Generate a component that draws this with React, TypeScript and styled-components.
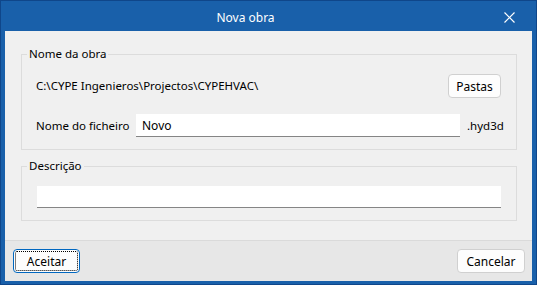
import React from 'react';
import styled, { createGlobalStyle } from 'styled-components';

const GlobalStyle = createGlobalStyle`
  html, body {
    margin: 0;
    padding: 0;
    background: #ffffff;
  }
  body {
    font-family: "Noto Sans", "Liberation Sans", sans-serif;
    font-size: 11.5px;
    color: #000000;
  }
`;

const Window = styled.div`
  width: 537px;
  height: 285px;
  box-sizing: border-box;
  display: flex;
  flex-direction: column;
  background: #1960aa;
  border: 1px solid #0f468a;
  padding: 0 4px 3px 4px;
`;

const TitleBar = styled.div`
  height: 30px;
  display: flex;
  align-items: center;
  color: #ffffff;
  flex-shrink: 0;
`;

const TitleText = styled.div`
  flex: 1;
  text-align: center;
  font-size: 12px;
  padding-top: 2px;
`;

const CloseButton = styled.div`
  width: 46px;
  height: 30px;
  display: flex;
  align-items: center;
  justify-content: center;
  padding-top: 3px;
  box-sizing: border-box;
`;

const Client = styled.div`
  flex: 1;
  display: flex;
  flex-direction: column;
  background: #f0f0f0;
`;

const Content = styled.div`
  flex: 1;
  display: flex;
  flex-direction: column;
  gap: 8px;
  padding: 15px 15px 0 16px;
`;

const Group = styled.fieldset`
  margin: 0;
  min-width: 0;
  border: 1px solid #dcdcdc;
  padding: 0;
`;

const Legend = styled.legend`
  margin-left: 5px;
  padding: 0 2px;
  line-height: 16px;
  font-size: 11.5px;
`;

const GroupBody = styled.div<{ $padLeft: number }>`
  display: flex;
  flex-direction: column;
  gap: 16px;
  padding: 12px 15px 12px ${p => p.$padLeft}px;
`;

const Row = styled.div`
  display: flex;
  align-items: center;
`;

const PathText = styled.div`
  flex: 1;
  line-height: 24px;
`;

const FieldLabel = styled.div`
  width: 100px;
  flex-shrink: 0;
`;

const TextInput = styled.div<{ $height: number }>`
  flex: 1;
  height: ${p => p.$height}px;
  box-sizing: border-box;
  background: #ffffff;
  border-bottom: 1px solid #858585;
  display: flex;
  align-items: center;
  padding: 0 6px;
  font-size: 12px;
`;

const Suffix = styled.div`
  width: 34px;
  padding-left: 7px;
`;

const Footer = styled.div`
  height: 40px;
  flex-shrink: 0;
  border-top: 1px solid #dadada;
  background: #e7e7e7;
  display: flex;
  align-items: center;
  justify-content: space-between;
  padding: 0 7px 0 8px;
`;

const Button = styled.div<{ $width: number; $focused?: boolean }>`
  width: ${p => p.$width}px;
  height: 24px;
  box-sizing: border-box;
  border-radius: 4px;
  background: #fdfdfd;
  border: 1px solid ${p => (p.$focused ? '#0067c0' : '#d0d0d0')};
  display: flex;
  align-items: center;
  justify-content: center;
  font-size: 12px;
  outline: ${p => (p.$focused ? '1px dotted #000000' : 'none')};
  outline-offset: -3px;
`;

export default function App() {
  return (
    <>
      <GlobalStyle />
      <Window>
        <TitleBar>
          <TitleText>Nova obra</TitleText>
          <CloseButton>
            <svg width="11" height="11" viewBox="0 0 11 11">
              <path d="M0.5 0.5 L10.5 10.5 M10.5 0.5 L0.5 10.5" stroke="#ffffff" strokeWidth="1.2" fill="none" />
            </svg>
          </CloseButton>
        </TitleBar>
        <Client>
          <Content>
            <Group>
              <Legend>Nome da obra</Legend>
              <GroupBody $padLeft={14}>
                <Row>
                  <PathText>C:\CYPE Ingenieros\Projectos\CYPEHVAC\</PathText>
                  <Button $width={53}>Pastas</Button>
                </Row>
                <Row>
                  <FieldLabel>Nome do ficheiro</FieldLabel>
                  <TextInput $height={23}>Novo</TextInput>
                  <Suffix>.hyd3d</Suffix>
                </Row>
              </GroupBody>
            </Group>
            <Group>
              <Legend>Descrição</Legend>
              <GroupBody $padLeft={15}>
                <Row>
                  <TextInput $height={22} />
                </Row>
              </GroupBody>
            </Group>
          </Content>
          <Footer>
            <Button $width={67} $focused>Aceitar</Button>
            <Button $width={68}>Cancelar</Button>
          </Footer>
        </Client>
      </Window>
    </>
  );
}
